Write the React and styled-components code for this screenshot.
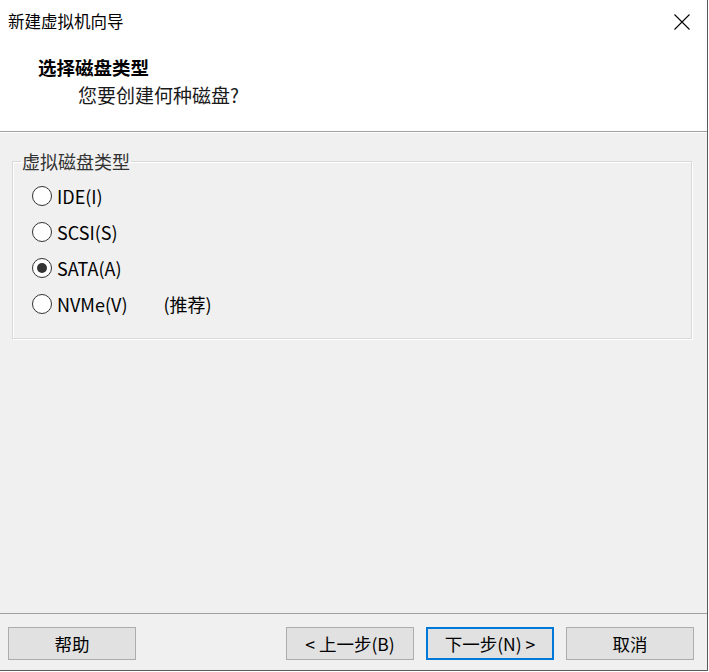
import React from 'react'
import styled, { createGlobalStyle } from 'styled-components'

const GlobalStyle = createGlobalStyle`
  html, body {
    margin: 0;
    padding: 0;
    background: #ffffff;
  }
  body {
    font-family: "Noto Sans CJK SC", "Noto Sans", sans-serif;
    color: #000000;
  }
`;

const Window = styled.div`
  width: 707px;
  height: 670px;
  display: flex;
  flex-direction: column;
  background: #f0f0f0;
  border-right: 1px solid #5a5a5a;
  border-bottom: 1px solid #5a5a5a;
`;

const TitleBar = styled.div`
  height: 42px;
  display: flex;
  align-items: center;
  justify-content: space-between;
  padding: 0 17px 0 8px;
  background: #ffffff;
  font-size: 16.5px;
`;

const CloseButton = styled.button`
  width: 16px;
  height: 16px;
  padding: 0;
  border: 0;
  background: transparent;
  display: flex;
  margin-top: 1px;
`;

const Header = styled.header`
  height: 90px;
  box-sizing: border-box;
  padding-top: 13px;
  background: #ffffff;
  border-bottom: 1px solid #a0a0a0;

  h2 {
    margin: 0 0 0 38px;
    font-size: 18.5px;
    font-weight: 700;
    line-height: 24px;
  }

  p {
    margin: 4px 0 0 78px;
    font-size: 19px;
    line-height: 24px;
    color: #1a1a1a;
  }
`;

const Body = styled.main`
  flex: 1;
  padding: 18px 15px 0 12px;
  border-top: 1px solid #ffffff;
`;

const GroupBox = styled.fieldset`
  margin: 0;
  padding: 7px 0 16px 19px;
  border: 1px solid #d9d9d9;
  box-shadow: 1px 1px 0 #ffffff, inset 1px 1px 0 #ffffff;

  legend {
    margin-left: -11px;
    padding: 0 1px;
    font-size: 18px;
    line-height: 20px;
    color: #333333;
  }
`;

const RadioRow = styled.label`
  height: 36px;
  display: flex;
  align-items: center;
  font-size: 18px;
  color: #000000;
`;

const RadioCircle = styled.span`
  width: 18px;
  height: 18px;
  border: 1px solid #333333;
  border-radius: 50%;
  background: #ffffff;
  display: flex;
  align-items: center;
  justify-content: center;
  margin-right: 5px;

  &::after {
    content: '';
    width: 10px;
    height: 10px;
    border-radius: 50%;
    background: ${(p) => (p.$checked ? '#333333' : 'transparent')};
  }
`;

const Note = styled.span`
  margin-left: 36px;
`;

const Footer = styled.footer`
  height: 57px;
  box-sizing: border-box;
  border-top: 1px solid #a0a0a0;
  padding: 13px 13px 0 8px;
  display: flex;
  gap: 12px;

  .spacer {
    flex: 1;
  }
`;

const Button = styled.button`
  width: 128px;
  height: 33px;
  box-sizing: border-box;
  background: #e1e1e1;
  border: ${(p) => (p.$default ? '2px solid #0078d7' : '1px solid #adadad')};
  font-family: "Noto Sans CJK SC", "Noto Sans", sans-serif;
  font-size: 17.5px;
  color: #000000;
  padding: 0;
`;

const options = [
  { label: 'IDE(I)' },
  { label: 'SCSI(S)' },
  { label: 'SATA(A)', checked: true },
  { label: 'NVMe(V)', note: '(推荐)' },
];

const App = () => {
  return (
    <>
      <GlobalStyle />
      <Window>
        <TitleBar>
          <span>新建虚拟机向导</span>
          <CloseButton aria-label="关闭">
            <svg width="16" height="16" viewBox="0 0 16 16">
              <path d="M0.5 0.5 L15.5 15.5 M15.5 0.5 L0.5 15.5" stroke="#000" strokeWidth="1.1" fill="none" />
            </svg>
          </CloseButton>
        </TitleBar>
        <Header>
          <h2>选择磁盘类型</h2>
          <p>您要创建何种磁盘?</p>
        </Header>
        <Body>
          <GroupBox>
            <legend>虚拟磁盘类型</legend>
            {options.map((o) => (
              <RadioRow key={o.label}>
                <RadioCircle $checked={o.checked} />
                {o.label}
                {o.note && <Note>{o.note}</Note>}
              </RadioRow>
            ))}
          </GroupBox>
        </Body>
        <Footer>
          <Button>帮助</Button>
          <span className="spacer" />
          <Button>&lt; 上一步(B)</Button>
          <Button $default>下一步(N) &gt;</Button>
          <Button>取消</Button>
        </Footer>
      </Window>
    </>
  )
}

export default App
